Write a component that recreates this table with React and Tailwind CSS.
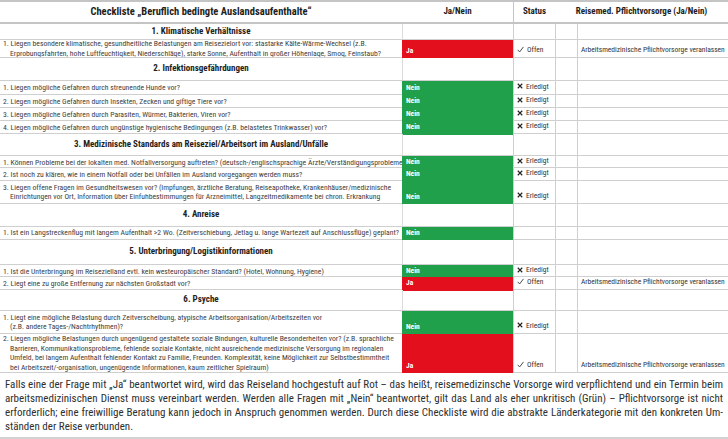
import React from "react";

const font = "font-['Roboto','Open_Sans',sans-serif] font-stretch-condensed";

const sections = [
  {
    title: "1. Klimatische Verhältnisse",
    h: "h-[16px]",
    items: [
      {
        q: [
          "1. Liegen besondere klimatische, gesundheitliche Belastungen am Reisezielort vor: stastarke Kälte-Wärme-Wechsel (z.B.",
          "Erprobungsfahrten, hohe Luftfeuchtigkeit, Niederschläge), starke Sonne, Aufenthalt in großer Höhenlage, Smog, Feinstaub?",
        ],
        a: "Ja",
        h: "h-[18px]",
      },
    ],
  },
  {
    title: "2. Infektionsgefährdungen",
    h: "h-[23px]",
    items: [
      { q: ["1. Liegen mögliche Gefahren durch streunende Hunde vor?"], a: "Nein", h: "h-[14px]" },
      { q: ["2. Liegen mögliche Gefahren durch Insekten, Zecken und giftige Tiere vor?"], a: "Nein", h: "h-[13px]" },
      { q: ["3. Liegen mögliche Gefahren durch Parasiten, Würmer, Bakterien, Viren vor?"], a: "Nein", h: "h-[13px]" },
      {
        q: ["4. Liegen mögliche Gefahren durch ungünstige hygienische Bedingungen (z.B. belastetes Trinkwasser) vor?"],
        a: "Nein",
        h: "h-[13px]",
      },
    ],
  },
  {
    title: "3. Medizinische Standards am Reiseziel/Arbeitsort im Ausland/Unfälle",
    h: "h-[22px]",
    items: [
      {
        q: ["1. Können Probleme bei der lokalten med. Notfallversorgung auftreten? (deutsch-/englischsprachige Ärzte/Verständigungsprobleme"],
        a: "Nein",
        h: "h-[12px]",
      },
      {
        q: ["2. Ist noch zu klären, wie in einem Notfall oder bei Unfällen im Ausland vorgegangen werden muss?"],
        a: "Nein",
        h: "h-[13px]",
      },
      {
        q: [
          "3. Liegen offene Fragen im Gesundheitswesen vor? (Impfungen, ärztliche Beratung, Reiseapotheke, Krankenhäuser/medizinische",
          "Einrichtungen vor Ort, Information über Einfuhbestimmungen für Arzneimittel, Langzeitmedikamente bei chron. Erkrankung",
        ],
        a: "Nein",
        h: "h-[23px]",
      },
    ],
  },
  {
    title: "4. Anreise",
    h: "h-[23px]",
    items: [
      {
        q: ["1. Ist ein Langstreckenflug mit langem Aufenthalt >2 Wo. (Zeitverschiebung, Jetlag u. lange Wartezeit auf Anschlussflüge) geplant?"],
        a: "Nein",
        noStatus: true,
        h: "h-[13px]",
      },
    ],
  },
  {
    title: "5. Unterbringung/Logistikinformationen",
    h: "h-[25px]",
    items: [
      {
        q: ["1. Ist die Unterbringung im Reisezielland evtl. kein westeuropäischer Standard? (Hotel, Wohnung, Hygiene)"],
        a: "Nein",
        h: "h-[12px]",
      },
      { q: ["2. Liegt eine zu große Entfernung zur nächsten Großstadt vor?"], a: "Ja", h: "h-[13px]" },
    ],
  },
  {
    title: "6. Psyche",
    h: "h-[21px]",
    items: [
      {
        q: [
          "1. Liegt eine mögliche Belastung durch Zeitverscheibung, atypische Arbeitsorganisation/Arbeitszeiten vor",
          "(z.B. andere Tages-/Nachtrhythmen)?",
        ],
        a: "Nein",
        h: "h-[23px]",
      },
      {
        q: [
          "2. Liegen mögliche Belastungen durch ungenügend gestaltete soziale Bindungen, kulturelle Besonderheiten vor? (z.B. sprachliche",
          "Barrieren, Kommunikationsprobleme, fehlende soziale Kontakte, nicht ausreichende medizinische Versorgung im regionalen",
          "Umfeld, bei langem Aufenthalt fehlender Kontakt zu Familie, Freunden. Komplexität, keine Möglichkeit zur Selbstbestimmtheit",
          "bei Arbeitszeit/-organisation, ungenügende Informationen, kaum zeitlicher Spielraum)",
        ],
        a: "Ja",
        h: "h-[39px]",
      },
    ],
  },
];

const paragraph = [
  "Falls eine der Frage mit „Ja“ beantwortet wird, wird das Reiseland hochgestuft auf Rot – das heißt, reisemedizinsche Vorsorge wird verpflichtend und ein Termin beim",
  "arbeitsmedizinischen Dienst muss vereinbart werden. Werden alle Fragen mit „Nein“ beantwortet, gilt das Land als eher unkritisch (Grün) – Pflichtvorsorge ist nicht",
  "erforderlich; eine freiwillige Beratung kann jedoch in Anspruch genommen werden. Durch diese Checkliste wird die abstrakte Länderkategorie mit den konkreten Um-",
  "ständen der Reise verbunden.",
];

const cols = "grid grid-cols-[402px_111px_42px_22px_1fr]";

const Check = () => (
  <svg width="7" height="7" viewBox="0 0 8 8" className="mr-[3px] shrink-0">
    <path d="M0.8 4.4 L3 6.8 L7.4 1" fill="none" stroke="#333" strokeWidth="1" />
  </svg>
);

const Cross = () => (
  <svg width="6" height="6" viewBox="0 0 8 8" className="mr-[3px] shrink-0">
    <path d="M1 1 L7 7 M7 1 L1 7" fill="none" stroke="#222" strokeWidth="1.5" />
  </svg>
);

const SectionRow = ({ title, h }) => (
  <div className={`${cols} ${h} border-b border-[#cfcfcf]`}>
    <div className="flex items-center justify-center text-[9px] font-bold text-[#1e1e1e]">{title}</div>
    <div className="border-l border-[#dcdcdc]" />
    <div className="border-l border-[#cfcfcf]" />
    <div className="border-l border-[#cfcfcf]" />
    <div className="border-l border-[#cfcfcf]" />
  </div>
);

const ItemRow = ({ item }) => {
  const ja = item.a === "Ja";
  return (
    <div className={`${cols} ${item.h} border-b border-[#cfcfcf] text-[7.7px] leading-[9.5px]`}>
      <div className="flex flex-col justify-center overflow-hidden pl-[3px] text-[#404040] whitespace-nowrap">
        {item.q.map((line, i) => (
          <div key={i} className={i > 0 ? "pl-[7px]" : ""}>
            {line}
          </div>
        ))}
      </div>
      <div
        className={`-mb-px flex items-end pb-[3px] pl-[4px] text-[7.5px] font-bold text-white ${
          ja ? "bg-[#e30f1c]" : "bg-[#21a04b]"
        }`}
      >
        {item.a}
      </div>
      <div className="flex items-end pb-[3px] pl-[3px] text-[7.5px] text-[#333] whitespace-nowrap border-l border-[#cfcfcf]">
        {!item.noStatus && (
          <span className="flex items-center">
            {ja ? <Check /> : <Cross />}
            {ja ? "Offen" : "Erledigt"}
          </span>
        )}
      </div>
      <div className="border-l border-[#cfcfcf]" />
      <div className="flex items-end pb-[3px] pl-[3px] text-[7.5px] text-[#333] whitespace-nowrap border-l border-[#cfcfcf]">
        {ja ? "Arbeitsmedizinische Pflichtvorsorge veranlassen" : ""}
      </div>
    </div>
  );
};

export default function App() {
  return (
    <div className={`w-[728px] h-[439px] overflow-hidden bg-white ${font}`}>
      <div className={`${cols} h-[24px] border-y-2 border-[#c4c4c4] text-[9px] font-bold text-[#1e1e1e]`}>
        <div className="flex items-center justify-center text-[10.5px]">Checkliste „Beruflich bedingte Auslandsaufenthalte“</div>
        <div className="flex items-center justify-center">Ja/Nein</div>
        <div className="flex items-center justify-center border-l border-[#c4c4c4]">Status</div>
        <div className="col-span-2 flex items-center justify-center">Reisemed. Pflichtvorsorge (Ja/Nein)</div>
      </div>
      {sections.map((s) => (
        <React.Fragment key={s.title}>
          <SectionRow title={s.title} h={s.h} />
          {s.items.map((item, i) => (
            <ItemRow key={i} item={item} />
          ))}
        </React.Fragment>
      ))}
      <div className="px-[5px] pt-[5px] text-[11px] leading-[14px] text-[#2e2e2e]">
        {paragraph.map((line, i) => (
          <div
            key={i}
            className={`whitespace-nowrap ${i < paragraph.length - 1 ? "text-justify [text-align-last:justify]" : ""}`}
          >
            {line}
          </div>
        ))}
      </div>
      <div className="mt-[3px] h-[6px] bg-[#d2d2d2]" />
    </div>
  );
}
